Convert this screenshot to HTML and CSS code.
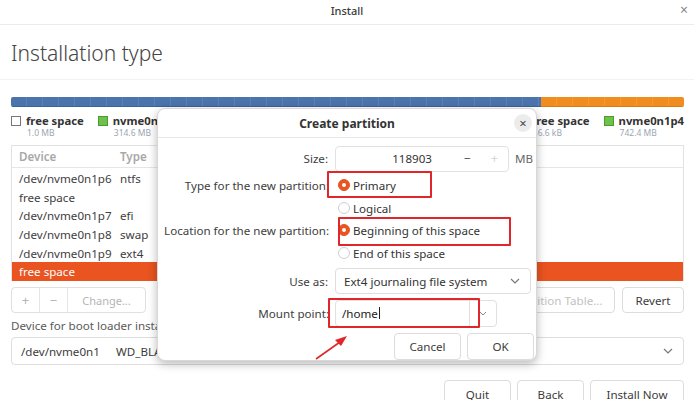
FILE: index.html
```html
<!DOCTYPE html>
<html>
<head>
<meta charset="utf-8">
<link rel="stylesheet" href="styles.css">
</head>
<body>
<div class="window">
  <header class="titlebar">
    <span class="title">Install</span>
    <span class="win-close">×</span>
  </header>
  <main class="content">
    <h1 class="heading">Installation type</h1>
    <div class="pbar">
      <div class="seg seg-blue" style="width:78.8%"></div>
      <div class="seg seg-orange" style="width:21.2%"></div>
    </div>
    <div class="legend">
      <div class="legend-group">
        <div class="litem">
          <span class="swatch swatch-free"></span>
          <div class="ltext"><span class="lname">free space</span><span class="lsize">1.0 MB</span></div>
        </div>
        <div class="litem">
          <span class="swatch swatch-green"></span>
          <div class="ltext"><span class="lname">nvme0n1p1</span><span class="lsize">314.6 MB</span></div>
        </div>
      </div>
      <div class="legend-group">
        <div class="litem">
          <span class="swatch swatch-free"></span>
          <div class="ltext"><span class="lname">free space</span><span class="lsize">46.6 kB</span></div>
        </div>
        <div class="litem">
          <span class="swatch swatch-green"></span>
          <div class="ltext"><span class="lname">nvme0n1p4</span><span class="lsize">742.4 MB</span></div>
        </div>
      </div>
    </div>
    <div class="ptable">
      <div class="prow phead"><span class="c-dev">Device</span><span class="c-type">Type</span></div>
      <div class="prow"><span class="c-dev">/dev/nvme0n1p6</span><span class="c-type">ntfs</span></div>
      <div class="prow"><span class="c-dev">free space</span><span class="c-type"></span></div>
      <div class="prow"><span class="c-dev">/dev/nvme0n1p7</span><span class="c-type">efi</span></div>
      <div class="prow"><span class="c-dev">/dev/nvme0n1p8</span><span class="c-type">swap</span></div>
      <div class="prow"><span class="c-dev">/dev/nvme0n1p9</span><span class="c-type">ext4</span></div>
      <div class="prow selected"><span class="c-dev">free space</span><span class="c-type"></span></div>
    </div>
    <div class="toolbar">
      <div class="btn-group">
        <span class="gbtn gbtn-sq">+</span><span class="gbtn gbtn-sq">−</span><span class="gbtn gbtn-change">Change...</span>
      </div>
      <div class="toolbar-right">
        <span class="btn btn-disabled btn-newtable">New Partition Table...</span>
        <span class="btn btn-revert">Revert</span>
      </div>
    </div>
    <div class="boot-label">Device for boot loader installation:</div>
    <div class="combo boot-combo">
      <span class="boot-dev">/dev/nvme0n1</span><span class="boot-name">WD_BLACK SN770 1TB (1.0 TB)</span>
      <svg class="chev" width="10" height="6" viewBox="0 0 10 6"><path d="M1 1 L5 5 L9 1" fill="none" stroke="#777" stroke-width="1.2"/></svg>
    </div>
    <div class="nav">
      <span class="btn nav-btn nav-quit">Quit</span>
      <span class="btn nav-btn nav-back">Back</span>
      <span class="btn nav-btn nav-install">Install Now</span>
    </div>
  </main>

  <section class="dialog">
    <div class="dlg-head">
      <span class="dlg-title">Create partition</span>
      <span class="dlg-close">×</span>
    </div>
    <div class="dlg-body">
      <div class="drow r-size">
        <span class="dlabel">Size:</span>
        <div class="dctrl">
          <div class="spin">
            <span class="spin-val">118903</span>
            <span class="spin-btn">−</span>
            <span class="spin-btn spin-dis">+</span>
          </div>
          <span class="unit">MB</span>
        </div>
      </div>
      <div class="drow r-type">
        <span class="dlabel">Type for the new partition:</span>
        <div class="dctrl"><span class="radio on"></span><span class="rtext">Primary</span></div>
      </div>
      <div class="drow r-logical">
        <span class="dlabel"></span>
        <div class="dctrl"><span class="radio"></span><span class="rtext">Logical</span></div>
      </div>
      <div class="drow r-loc">
        <span class="dlabel">Location for the new partition:</span>
        <div class="dctrl"><span class="radio on"></span><span class="rtext">Beginning of this space</span></div>
      </div>
      <div class="drow r-end">
        <span class="dlabel"></span>
        <div class="dctrl"><span class="radio"></span><span class="rtext">End of this space</span></div>
      </div>
      <div class="drow r-use">
        <span class="dlabel">Use as:</span>
        <div class="dctrl">
          <div class="combo use-combo">
            <span>Ext4 journaling file system</span>
            <svg class="chev" width="10" height="6" viewBox="0 0 10 6"><path d="M1 1 L5 5 L9 1" fill="none" stroke="#777" stroke-width="1.2"/></svg>
          </div>
        </div>
      </div>
      <div class="drow r-mount">
        <span class="dlabel">Mount point:</span>
        <div class="dctrl">
          <div class="mount">
            <span class="mount-entry">/home<span class="caret"></span></span>
            <span class="mount-arrow"><svg width="8" height="5" viewBox="0 0 8 5"><path d="M1 1 L4 4 L7 1" fill="none" stroke="#888" stroke-width="1"/></svg></span>
          </div>
        </div>
      </div>
      <div class="dlg-actions">
        <span class="btn dbtn">Cancel</span>
        <span class="btn dbtn">OK</span>
      </div>
    </div>
    <span class="mark mark-primary"></span>
    <span class="mark mark-begin"></span>
    <span class="mark mark-mount"></span>
  </section>

  <svg class="arrow" width="40" height="30" viewBox="0 0 40 30">
    <path d="M3 27 L27 10" stroke="#e0262b" stroke-width="1.6" fill="none"/>
    <path d="M34 4 L22 8 L28 14 Z" fill="#e0262b"/>
  </svg>
</div>
</body>
</html>
```

FILE: styles.css
```css
* { box-sizing: border-box; }
html, body {
  margin: 0;
  padding: 0;
  width: 694px;
  height: 400px;
  overflow: hidden;
  background: #ffffff;
  font-family: "Noto Sans", "Open Sans", sans-serif;
  font-size: 11.6px;
  color: #3c3c3c;
}
.window {
  position: relative;
  width: 694px;
  height: 400px;
}
.titlebar {
  height: 25px;
  border-bottom: 1px solid #ececec;
  display: flex;
  align-items: flex-start;
  justify-content: center;
  padding-top: 3px;
  line-height: 16px;
  position: relative;
}
.title { font-size: 11px; color: #3a3a3a; font-weight: 500; }
.win-close {
  position: absolute;
  right: 6px;
  top: 2px;
  font-size: 14px;
  color: #8a8a8a;
}
.content { padding: 0 10px 0 11px; }
.heading {
  margin: 0;
  height: 55px;
  line-height: 56px;
  font-size: 21px;
  font-weight: 300;
  color: #444;
  border-bottom: 1px solid #f2f2f2;
  margin-left: -11px;
  padding-left: 11px;
  margin-right: -10px;
}
.pbar {
  margin-top: 17px;
  height: 10px;
  display: flex;
  border-radius: 2px;
  overflow: hidden;
}
.seg { height: 100%; }
.seg-blue {
  background: repeating-linear-gradient(90deg, #4b74ad 0 15px, #5a82b8 15px 16px);
  border-bottom: 1px solid #3d6294;
}
.seg-orange {
  background: repeating-linear-gradient(90deg, #f18d1f 0 15px, #f49a35 15px 16px);
  border-bottom: 1px solid #d97a12;
}
.legend {
  margin-top: 8px;
  height: 24px;
  display: flex;
  justify-content: space-between;
}
.legend-group { display: flex; gap: 14px; }
.litem { display: flex; gap: 5px; align-items: flex-start; }
.swatch {
  width: 10px;
  height: 10px;
  margin-top: 1px;
  flex: none;
}
.swatch-free { border: 1px solid #777; background: #fff; }
.swatch-green { background: #6cc24a; border: 1px solid #4e9a2f; }
.ltext { display: flex; flex-direction: column; line-height: 12px; }
.lname { font-weight: 700; font-size: 11.3px; color: #333; }
.lsize { font-size: 8.5px; color: #9aa6b4; padding-left: 1px; }
.ptable {
  margin-top: 6px;
  height: 136px;
  border: 1px solid #e2e2e2;
  border-bottom: none;
}
.prow {
  display: flex;
  height: 18.7px;
  align-items: center;
  padding-left: 7px;
  color: #3e3e3e;
}
.phead {
  height: 22px;
  border-bottom: 1px solid #e6e6e6;
  color: #a8a8a8;
  font-weight: 600;
  margin-bottom: 1px;
}
.c-dev { width: 101px; }
.selected { background: #e95420; color: #fff; }
.toolbar {
  margin-top: 6px;
  height: 26px;
  display: flex;
  justify-content: space-between;
}
.btn-group {
  display: flex;
  border: 1px solid #e0e0e0;
  border-radius: 4px;
}
.gbtn {
  display: flex;
  align-items: center;
  justify-content: center;
  color: #b5b5b5;
  font-size: 11px;
}
.gbtn-sq { width: 28px; border-right: 1px solid #e6e6e6; font-size: 13px; }
.gbtn-change { width: 77px; }
.toolbar-right { display: flex; gap: 7px; }
.btn {
  display: flex;
  align-items: center;
  justify-content: center;
  border: 1px solid #dcdcdc;
  border-radius: 4px;
  background: #fff;
  color: #3c3c3c;
}
.btn-disabled { color: #c2c2c2; }
.btn-newtable { width: 140px; }
.btn-revert { width: 62px; }
.boot-label {
  margin-top: 5px;
  height: 15px;
  line-height: 15px;
  color: #5a5a5a;
}
.combo {
  display: flex;
  align-items: center;
  border: 1px solid #dedede;
  border-radius: 4px;
  position: relative;
}
.boot-combo {
  margin-top: 4px;
  height: 28px;
  padding-left: 9px;
}
.boot-dev { width: 95px; }
.chev { position: absolute; right: 10px; top: 50%; margin-top: -3px; }
.nav {
  margin-top: 15px;
  display: flex;
  justify-content: flex-end;
  gap: 6px;
}
.nav-btn { height: 28px; }
.nav-quit, .nav-back { width: 67px; }
.nav-install { width: 94px; }

/* dialog overlay */
.dialog {
  position: absolute;
  left: 157px;
  top: 108px;
  width: 380px;
  height: 253px;
  background: #fff;
  border-radius: 8px;
  border: 1px solid #d8d8d8;
  box-shadow: 0 3px 10px rgba(0,0,0,0.28);
}
.dlg-head {
  height: 29px;
  border-bottom: 1px solid #e8e8e8;
  display: flex;
  align-items: center;
  justify-content: center;
  position: relative;
}
.dlg-title { font-weight: 700; font-size: 12px; color: #333; }
.dlg-close {
  position: absolute;
  left: 356px;
  top: 5px;
  width: 18px;
  height: 18px;
  border-radius: 50%;
  background: #ececec;
  display: flex;
  align-items: center;
  justify-content: center;
  font-size: 13px;
  color: #444;
}
.dlg-body { padding-top: 7px; }
.drow { display: flex; align-items: center; }
.dlabel {
  width: 171px;
  text-align: right;
  color: #404040;
  flex: none;
  padding-right: 1px;
}
.dctrl {
  display: flex;
  align-items: center;
  padding-left: 6px;
}
.r-size { height: 27px; }
.r-type { height: 26px; }
.r-logical { height: 20px; }
.r-loc { height: 24px; }
.r-end { height: 22px; }
.r-use { height: 34px; }
.r-mount { height: 30px; }
.r-type .dlabel, .r-loc .dlabel, .r-mount .dlabel { padding-right: 0; }
.spin {
  width: 174px;
  height: 26px;
  border: 1px solid #e2e2e2;
  border-radius: 4px;
  display: flex;
  align-items: center;
}
.spin-val { flex: 1; text-align: right; padding-right: 22px; color: #333; }
.spin-btn { width: 27px; text-align: center; color: #555; font-size: 12px; }
.spin-dis { color: #d6d6d6; }
.unit { margin-left: 6px; color: #666; }
.radio {
  width: 12px;
  height: 12px;
  border-radius: 50%;
  border: 1px solid #cfcfcf;
  background: #fff;
  margin-left: 3px;
  margin-right: 3px;
  flex: none;
  position: relative;
}
.radio.on { background: #e95420; border-color: #e95420; }
.radio.on::after {
  content: "";
  position: absolute;
  left: 3px;
  top: 3px;
  width: 4px;
  height: 4px;
  border-radius: 50%;
  background: #fff;
}
.rtext { color: #333; }
.use-combo {
  width: 196px;
  height: 26px;
  padding-left: 8px;
  color: #333;
}
.mount {
  display: flex;
  height: 27px;
  width: 162px;
  border: 1px solid #e0e0e0;
  border-radius: 4px;
}
.mount-entry {
  width: 134px;
  display: flex;
  align-items: center;
  padding-left: 6px;
  border-right: 1px solid #e0e0e0;
  color: #222;
}
.caret { width: 1px; height: 12px; background: #222; margin-left: 1px; }
.mount-arrow {
  flex: 1;
  display: flex;
  align-items: center;
  justify-content: center;
}
.dlg-actions {
  display: flex;
  justify-content: flex-end;
  gap: 6px;
  margin-top: 5px;
  padding-right: 2px;
}
.dbtn { width: 67px; height: 27px; }
.mark {
  position: absolute;
  border: 2px solid #e0262b;
  border-radius: 1px;
}
.mark-primary { left: 169px; top: 62px; width: 105px; height: 27px; }
.mark-begin { left: 180px; top: 108px; width: 173px; height: 29px; }
.mark-mount { left: 170px; top: 189px; width: 152px; height: 30px; }
.arrow {
  position: absolute;
  left: 313px;
  top: 332px;
}
```
